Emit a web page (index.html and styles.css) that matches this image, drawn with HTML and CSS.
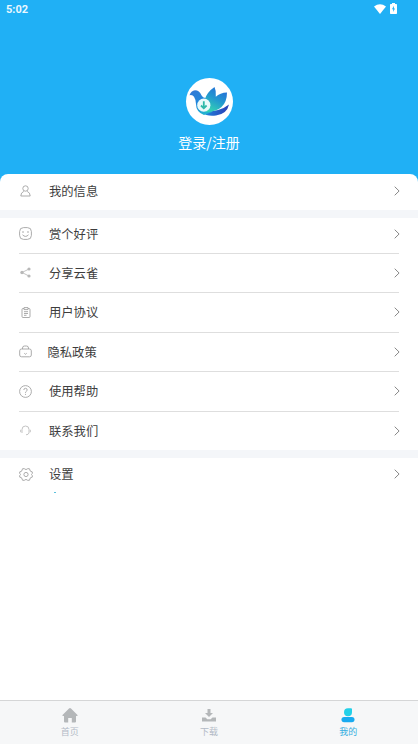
FILE: index.html
```html
<!DOCTYPE html>
<html lang="zh-CN">
<head>
<meta charset="utf-8">
<meta name="viewport" content="width=device-width">
<title>我的</title>
<link rel="stylesheet" href="styles.css">
</head>
<body>
<svg class="defs" aria-hidden="true"><symbol id="chevron" viewBox="0 0 6 10"><path d="M.7.7 5.1 5 .7 9.3"/></symbol></svg>
<div class="screen">
  <header class="hero">
    <div class="status">
      <span>5:02</span>
      <span class="status-icons">
        <svg width="12" height="10" viewBox="0 0 12 10"><path fill="#fff" d="M0 2.4Q6-2 12 2.4L6 10Z"/></svg>
        <svg width="7" height="11" viewBox="0 0 7 11"><path fill="#fff" d="M2 0h3v1h1.2q.8 0 .8.8v8.4q0 .8-.8.8H.8Q0 11 0 10.200V1.800Q0 1 .8 1H2Z"/><path fill="#20b0f5" d="M3.900 2.800 2 6.300h1.200v2.600L5 5.400H3.900Z"/></svg>
      </span>
    </div>
    <div class="avatar">
      <svg width="47" height="47" viewBox="0 0 47 47">
        <defs>
          <linearGradient id="body" x1="0" y1="0" x2=".6" y2="1"><stop offset="0" stop-color="#3478d4"/><stop offset=".55" stop-color="#1f87dc"/><stop offset="1" stop-color="#22b5cf"/></linearGradient>
          <linearGradient id="wing" x1=".8" y1="0" x2=".3" y2="1"><stop offset="0" stop-color="#2769d8"/><stop offset=".5" stop-color="#2298d0"/><stop offset="1" stop-color="#35d4b1"/></linearGradient>
          <linearGradient id="tail" x1="0" y1="0" x2="1" y2="0"><stop offset="0" stop-color="#1f8be0"/><stop offset="1" stop-color="#2b3db5"/></linearGradient>
        </defs>
        <path fill="url(#tail)" d="M16 34Q34 34 43 26.500Q41 36 30 37.500Q21 39 16 34Z"/>
        <path fill="url(#body)" d="M3.500 17.300Q5 13 9 12.300Q13.500 12.300 15.300 17Q16.500 20 22 20.500L26 34L18 37Q10 34 10 26Q10 22 8 18.800Q6.500 16.500 3.500 17.300Z"/>
        <path fill="url(#wing)" d="M18.500 22Q21 14 28.500 9Q30.500 13 29.800 18.700Q34 14.800 41 14.500Q41 24 35.500 29Q31 33.500 20 34Z"/>
        <circle cx="17.800" cy="27.200" r="6.600" fill="#e9fafa"/>
        <path fill="none" stroke="#2fb9a9" stroke-width="1.800" d="M17.800 23.200v7M15 27.500l2.800 2.800 2.800-2.800"/>
      </svg>
    </div>
    <div class="login">登录/注册</div>
  </header>
  <main>
    <section class="group profile">
      <div class="row"><span class="icon"><svg width="11" height="12" viewBox="0 0 11 12"><circle cx="5.500" cy="3.500" r="2.700"/><path d="M3.800 6.400Q.8 7.500.8 11h9.400Q10.200 7.500 7.200 6.400"/></svg></span><span class="label">我的信息</span><svg class="arrow"><use href="#chevron"/></svg></div>
    </section>
    <section class="group services">
      <div class="row"><span class="icon"><svg width="13" height="13" viewBox="0 0 13 13"><rect x=".6" y=".6" width="11.800" height="11.800" rx="4"/><path d="M3 5h2M8 5h2M3.500 7.800Q6.500 11 9.500 7.800"/></svg></span><span class="label">赏个好评</span><svg class="arrow"><use href="#chevron"/></svg></div>
      <div class="row"><span class="icon pale"><svg width="11" height="11" viewBox="0 0 11 11"><path d="M9 2 2 5.500 9 9"/><g fill="#b8b8b8" stroke="none"><circle cx="9" cy="2" r="1.600"/><circle cx="2" cy="5.500" r="1.700"/><circle cx="9" cy="9" r="1.600"/></g></svg></span><span class="label">分享云雀</span><svg class="arrow"><use href="#chevron"/></svg></div>
      <div class="row"><span class="icon"><svg width="10" height="11" viewBox="0 0 10 11"><path d="M3 1.500H2q-1 0-1 1v7q0 1 1 1h6q1 0 1-1v-7q0-1-1-1H7M3 .6h4v2H3ZM3 4.700h4M3 6.500h4M3 8.300h2.500"/></svg></span><span class="label">用户协议</span><svg class="arrow"><use href="#chevron"/></svg></div>
      <div class="row privacy"><span class="icon"><svg width="13" height="13" viewBox="0 0 13 13"><rect x=".7" y="4" width="11.600" height="7.800" rx="1.800"/><path d="M3.500 4V3q0-2 2-2h2q2 0 2 2v1M5.300 8.300l1.200 1 1.200-1"/></svg></span><span class="label">隐私政策</span><svg class="arrow"><use href="#chevron"/></svg></div>
      <div class="row"><span class="icon"><svg width="13" height="13" viewBox="0 0 13 13"><circle cx="6.500" cy="6.500" r="5.900"/><path d="M4.800 5q0-1.700 1.700-1.700T8.200 5q0 .8-.9 1.300t-.8 1.500M6.500 8.900v1"/></svg></span><span class="label">使用帮助</span><svg class="arrow"><use href="#chevron"/></svg></div>
      <div class="row"><span class="icon pale"><svg width="11" height="11" viewBox="0 0 11 11"><path d="M2 8V4.500Q2 1 5.500 1T9 4.500V8Q8.500 9.700 6 9.800M.7 4.800v2.400M10.300 4.800v2.400"/></svg></span><span class="label">联系我们</span><svg class="arrow"><use href="#chevron"/></svg></div>
    </section>
    <section class="group settings">
      <div class="row"><span class="icon"><svg width="14" height="13" viewBox="0 0 14 13"><path d="M3.600.7h1.700Q7 2.500 8.700.7h1.700l1 2.500 1.900.7v1.500q-1.600 1.100 0 2.200v1.500l-1.900.7-1 2.500H8.700Q7 10.500 5.300 12.300H3.600l-1-2.500-1.900-.7V7.600q1.600-1.100 0-2.200V3.900l1.900-.7Z"/><circle cx="7" cy="6.500" r="2.100"/></svg></span><span class="label">设置</span><svg class="arrow"><use href="#chevron"/></svg></div>
      <div class="dot"></div>
    </section>
  </main>
  <nav>
    <div class="tab"><svg width="16" height="15" viewBox="0 0 16 15"><path fill="#b4b7b9" d="M8 0q.5 0 1 .5L15.500 7q.5 1-.5 1h-1v5.500q0 1-1 1H9.800V10H6.200v4.500H3q-1 0-1-1V8H1Q0 8 .5 7L7 .5Q7.500 0 8 0Z"/></svg><span>首页</span></div>
    <div class="tab"><svg width="14" height="15" viewBox="0 0 14 15"><path fill="#b4b7b9" d="M5.500 1h3v4H11L7 9 3 5h2.500ZM0 9.500h3.500l1.800 1.700h3.400l1.800-1.700H14v4H0Z"/></svg><span>下载</span></div>
    <div class="tab active"><svg width="14" height="15" viewBox="0 0 14 15"><path fill="#22d0e8" d="M7 .2h3q1 0 1 1v3A4 4 0 1 1 7 .2Z"/><rect x=".5" y="9" width="13" height="5.200" rx="2.600" fill="#18aaf0"/></svg><span>我的</span></div>
  </nav>
</div>
</body>
</html>
```

FILE: styles.css
```css
* { box-sizing: border-box; }
body { margin: 0; background: #fff; font-family: "Noto Sans CJK SC", sans-serif; }
.defs { display: none; }
.screen { height: 744px; display: flex; flex-direction: column; overflow: hidden; }
.hero { height: 184px; flex: none; background: #20b0f5; color: #fff; display: flex; flex-direction: column; align-items: center; }
.status { width: 100%; height: 18px; padding: 0 21px 0 6px; display: flex; justify-content: space-between; align-items: center; font: 700 11px/18px Roboto, sans-serif; color: #e9f7ff; }
.status > span:first-child { padding-top: 1px; }
.status-icons { display: flex; align-items: center; gap: 4px; padding-bottom: 1px; }
.avatar { width: 47px; height: 47px; margin-top: 60px; border-radius: 50%; background: #fff; }
.avatar svg { display: block; }
.login { margin-top: 7px; font-size: 14px; line-height: 20px; }
main { flex: 1; margin-top: -10px; border-radius: 8px 8px 0 0; overflow: hidden; background: #fff; }
.group { border-bottom: 8px solid #f4f6f9; }
.profile { height: 44px; }
.services { height: 240px; }
.settings { border: 0; padding-top: 0; }
.row { height: 39.500px; margin: 0 19px; display: flex; align-items: center; border-bottom: 1px solid #dedede; }
.row:last-child { border-bottom-color: transparent; }
.profile .row { height: 34px; border: 0; }
.services .row:first-child { height: 35.500px; padding-bottom: 3px; }
.settings .row { height: 32px; border: 0; }
.icon { width: 13px; height: 14px; margin-right: 17px; display: flex; align-items: center; justify-content: center; }
.icon svg { flex: none; fill: none; stroke: #a3a3a3; stroke-width: .9; }
.icon.pale svg { stroke: #bdbdbd; }
.label { font-size: 12.300px; line-height: 18px; color: #3d3d3d; }
.privacy .label { margin-left: -1.500px; }
.arrow { width: 6px; height: 10px; margin-left: auto; margin-right: -1px; fill: none; stroke: #888; stroke-width: 1; }
.dot { width: 2px; height: 1px; margin: 2px 0 0 54px; background: #5bc0dc; }
nav { height: 44px; flex: none; display: grid; grid-template-columns: repeat(3, 1fr); background: #f6f7f8; border-top: 1px solid #d5d6d7; }
.tab { display: flex; flex-direction: column; align-items: center; padding-top: 7px; color: #b3bac6; font-size: 9px; line-height: 13px; }
.tab svg { display: block; margin-bottom: 2px; }
.active { color: #35aee0; }
```
